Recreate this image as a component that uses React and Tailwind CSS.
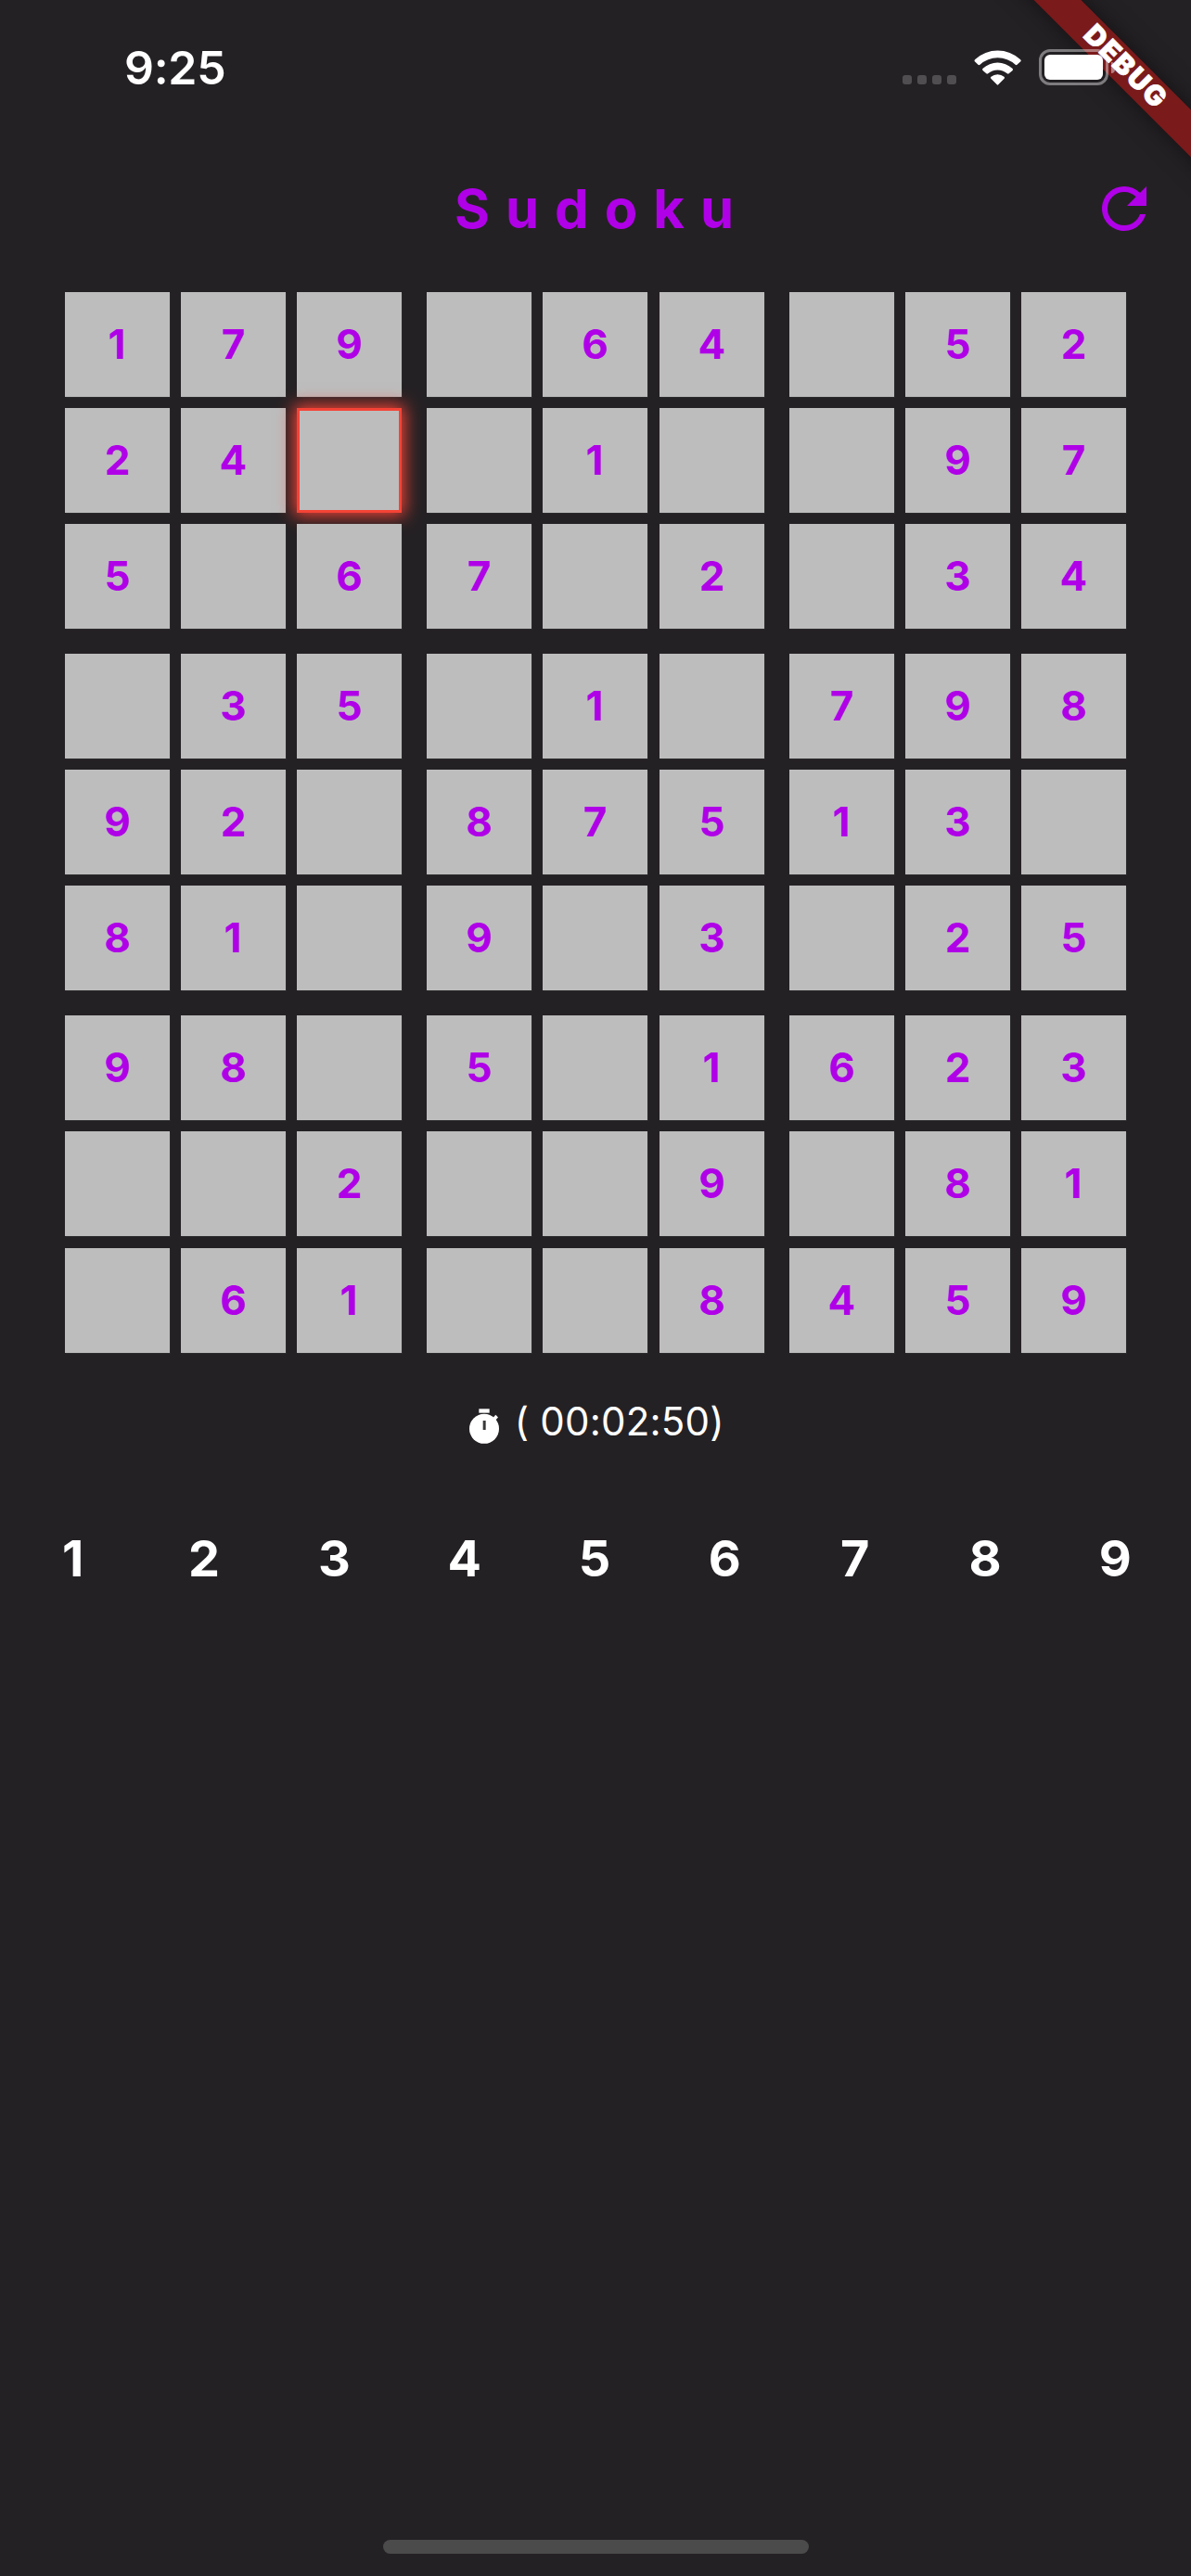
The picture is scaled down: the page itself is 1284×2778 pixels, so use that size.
import React from 'react';

const BOARD = [
  ['1', '7', '9', '', '6', '4', '', '5', '2'],
  ['2', '4', '', '', '1', '', '', '9', '7'],
  ['5', '', '6', '7', '', '2', '', '3', '4'],
  ['', '3', '5', '', '1', '', '7', '9', '8'],
  ['9', '2', '', '8', '7', '5', '1', '3', ''],
  ['8', '1', '', '9', '', '3', '', '2', '5'],
  ['9', '8', '', '5', '', '1', '6', '2', '3'],
  ['', '', '2', '', '', '9', '', '8', '1'],
  ['', '6', '1', '', '', '8', '4', '5', '9'],
];

const SELECTED = { row: 1, col: 2 };

// Space after each column and row: wider between the 3x3 boxes.
const COL_GAP = ['mr-[12px]', 'mr-[12px]', 'mr-[27px]', 'mr-[12px]', 'mr-[13px]', 'mr-[27px]', 'mr-[12px]', 'mr-[12px]', ''];
const ROW_GAP = ['mb-[12px]', 'mb-[12px]', 'mb-[27px]', 'mb-[12px]', 'mb-[12px]', 'mb-[27px]', 'mb-[12px]', 'mb-[13px]', ''];

function DebugBanner() {
  return (
    <div className="pointer-events-none absolute right-0 top-0 h-[300px] w-[300px] overflow-hidden">
      <div className="absolute left-[28px] top-[54px] flex h-[36px] w-[400px] rotate-45 items-center justify-center bg-[#7b1a1b] shadow-[0_0_24px_rgba(0,0,0,0.5)]">
        <span className="-mt-[4px] pl-[2.5px] text-[30px] font-black leading-[36px] tracking-[1.7px] text-white [-webkit-text-stroke:0.7px_white]">
          DEBUG
        </span>
      </div>
    </div>
  );
}

function StatusBar() {
  return (
    <div className="relative z-10 flex h-[146px] items-center pl-[134px] pr-[82px] text-white">
      <span className="text-[50px] font-semibold tracking-[-0.3px]">9:25</span>
      <div className="ml-auto mt-[26px] flex gap-[6px]">
        {[0, 1, 2, 3].map((i) => (
          <div key={i} className="h-[10px] w-[10px] rounded-[3px] bg-[#504e50]" />
        ))}
      </div>
      <svg className="mb-px ml-[19px] h-[38px] w-[51.33px]" viewBox="300 160 154 114" fill="currentColor">
        <path d="M304 190.2A107.5 107.5 0 0 1 449.500 190.200Q454 194 451 197L439.500 207.500Q437 209.500 434 207A85 85 0 0 0 319.500 207Q316 209.500 313.500 207.500L302.500 197Q300 194 304 190.200Z" />
        <path d="M329 219.500A69.500 69.500 0 0 1 424 219.500Q428 223 425 226L413 236Q411 238 407.500 236A47.500 47.500 0 0 0 345.500 236Q342.500 238 340 236L328.500 226Q325.500 223 329 219.500Z" />
        <path d="M355.500 246.500A31.500 31.500 0 0 1 397.500 246.500Q401 249.500 398 252.500L378.500 272Q376.500 274 374.500 272L355 252.500Q352 249.500 355.500 246.500Z" />
      </svg>
      <div className="mb-px ml-[19px] flex h-[39px] w-[75px] rounded-[12px] border-[3px] border-white/41 p-[3px]">
        <div className="h-full w-full rounded-[6px] bg-white" />
      </div>
      <div className="ml-[3px] h-[12px] w-[4px] rounded-r-full bg-white/45" />
    </div>
  );
}

function Header() {
  return (
    <div className="relative flex h-[158px] items-center justify-center pr-[3px]">
      <h1 className="text-[58px] font-bold leading-[70px] text-[#b000e8] [word-spacing:3.3px]">S u d o k u</h1>
      <button className="absolute right-[36px] top-[43px] text-[#b000e8]" aria-label="Restart">
        <svg className="h-[72px] w-[72px]" viewBox="0 0 24 24" fill="currentColor">
          <path d="M17.65 6.35A7.958 7.958 0 0 0 12 4a8 8 0 1 0 7.730 10h-2.080A5.990 5.990 0 0 1 12 18a6 6 0 1 1 0-12c1.660 0 3.140.690 4.220 1.780L13 11h7V4z" />
        </svg>
      </button>
    </div>
  );
}

function Cell({ value, selected, gap }) {
  return (
    <div
      className={`flex h-[113px] w-[113px] shrink-0 items-center justify-center bg-[#bdbdbd] pb-[2px] text-[44px] font-bold leading-[54px] text-[#b000e8] ${gap} ${
        value === '1' ? 'pr-px' : ''
      } ${selected ? 'border-[3px] border-[#f44336] shadow-[0_0_17px_3px_#f44336]' : 'shadow-[1px_1px_0_#2b2a2c]'}`}
    >
      {value}
    </div>
  );
}

function Board() {
  return (
    <div className="mt-[11px] pl-[70px]">
      {BOARD.map((row, r) => (
        <div key={r} className={`flex ${ROW_GAP[r]}`}>
          {row.map((value, c) => (
            <Cell key={c} value={value} gap={COL_GAP[c]} selected={r === SELECTED.row && c === SELECTED.col} />
          ))}
        </div>
      ))}
    </div>
  );
}

function Timer() {
  return (
    <div className="mt-[43px] flex h-[61px] items-center gap-[15.5px] pl-[506px] text-white">
      <svg className="mt-[11px] h-[39.33px] w-[33.33px]" viewBox="78 114 100 118" fill="currentColor">
        <rect x="109" y="118" width="34" height="13" />
        <path d="M154 148L163 137.500L171 145.500L162 155Z" />
        <circle cx="126" cy="182.500" r="48" />
        <rect x="122" y="156" width="9" height="30" fill="#3a383a" />
      </svg>
      <span className="whitespace-pre text-[42px] leading-[51px] tracking-[0.2px]">( 00:02:50)</span>
    </div>
  );
}

function Keypad() {
  return (
    <div className="ml-[9.5px] mt-[80px] grid w-[1263px] grid-cols-9 text-center text-[54px] font-bold leading-[75px] text-white">
      {[1, 2, 3, 4, 5, 6, 7, 8, 9].map((n) => (
        <button key={n} className={n === 1 ? 'pr-[2px]' : ''}>
          {n}
        </button>
      ))}
    </div>
  );
}

export default function App() {
  return (
    <div className="relative flex h-[2778px] w-[1284px] flex-col overflow-hidden bg-[#242124] font-['Inter',sans-serif]">
      <DebugBanner />
      <StatusBar />
      <Header />
      <Board />
      <Timer />
      <Keypad />
      <div className="mb-[24px] ml-[413px] mt-auto h-[15px] w-[459px] rounded-full bg-[#4b4b4b]" />
    </div>
  );
}
